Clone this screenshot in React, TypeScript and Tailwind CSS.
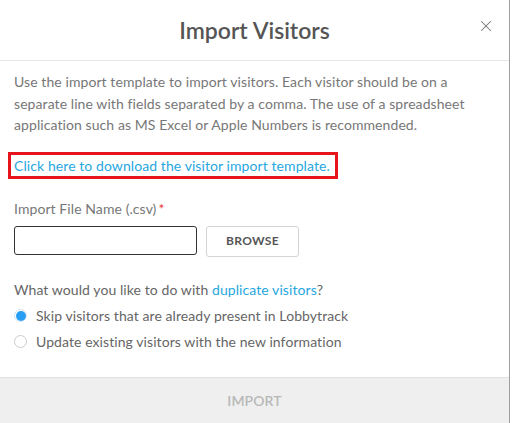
import { X } from 'lucide-react'

export default function App() {
  return (
    <div className="w-[512px] h-[423px] bg-white font-['Lato',sans-serif] text-[#666] tracking-[0.08px]">
      <div className="w-[510px] h-full border-r border-[#a0a0a0] flex flex-col">
        {/* Header */}
        <div className="relative h-[61px] border-b border-[#e6e6e6] flex items-center justify-center">
          <h2 className="text-[23px] font-semibold text-[#555] tracking-normal">Import Visitors</h2>
          <button className="absolute right-[14px] top-[17px] text-[#777]">
            <X size={18} strokeWidth={1.4} />
          </button>
        </div>

        {/* Body */}
        <div className="flex-1 px-[14px] pt-[10px]">
          <p className="text-[14px] leading-[21.5px] text-[#777]">
            Use the import template to import visitors. Each visitor should be on a separate line
            with fields separated by a comma. The use of a spreadsheet application such as MS Excel
            or Apple Numbers is recommended.
          </p>

          <div className="mt-[16px] -ml-[6px] w-[330px] h-[27px] border-[3px] border-[#e8141c] flex items-center pl-[3px]">
            <a className="text-[14px] text-[#27a7e0] whitespace-nowrap">
              Click here to download the visitor import template.
            </a>
          </div>

          <div className="mt-[19px] text-[14px] text-[#777]">
            Import File Name (.csv)<span className="text-[#e53935] ml-[2px]">*</span>
          </div>
          <div className="mt-[7px] flex gap-[9px]">
            <input className="w-[183px] h-[29px] border border-[#333] rounded-[3px] px-2 text-sm outline-none" />
            <button className="w-[93px] h-[31px] border border-[#d4d4d4] rounded-[3px] text-[12px] font-bold text-[#555] tracking-wide">
              BROWSE
            </button>
          </div>

          <div className="mt-[22px] text-[14px] text-[#666]">
            What would you like to do with <span className="text-[#27a7e0]">duplicate visitors</span>?
          </div>
          <div className="mt-[6px] flex flex-col gap-[6px]">
            <label className="flex items-center gap-[9px] text-[14px] text-[#666] h-[20px]">
              <span className="w-[13px] h-[13px] rounded-full border border-[#cfe3f5] flex items-center justify-center">
                <span className="w-[10px] h-[10px] rounded-full bg-[#2a9df4]" />
              </span>
              Skip visitors that are already present in Lobbytrack
            </label>
            <label className="flex items-center gap-[9px] text-[14px] text-[#666] h-[20px]">
              <span className="w-[13px] h-[13px] rounded-full border border-[#ccc]" />
              Update existing visitors with the new information
            </label>
          </div>
        </div>

        {/* Footer */}
        <div className="h-[46px] bg-[#efefef] border-t border-[#e2e2e2] flex items-center justify-center">
          <span className="text-[14px] font-semibold text-[#b8b8b8]">IMPORT</span>
        </div>
      </div>
    </div>
  )
}
